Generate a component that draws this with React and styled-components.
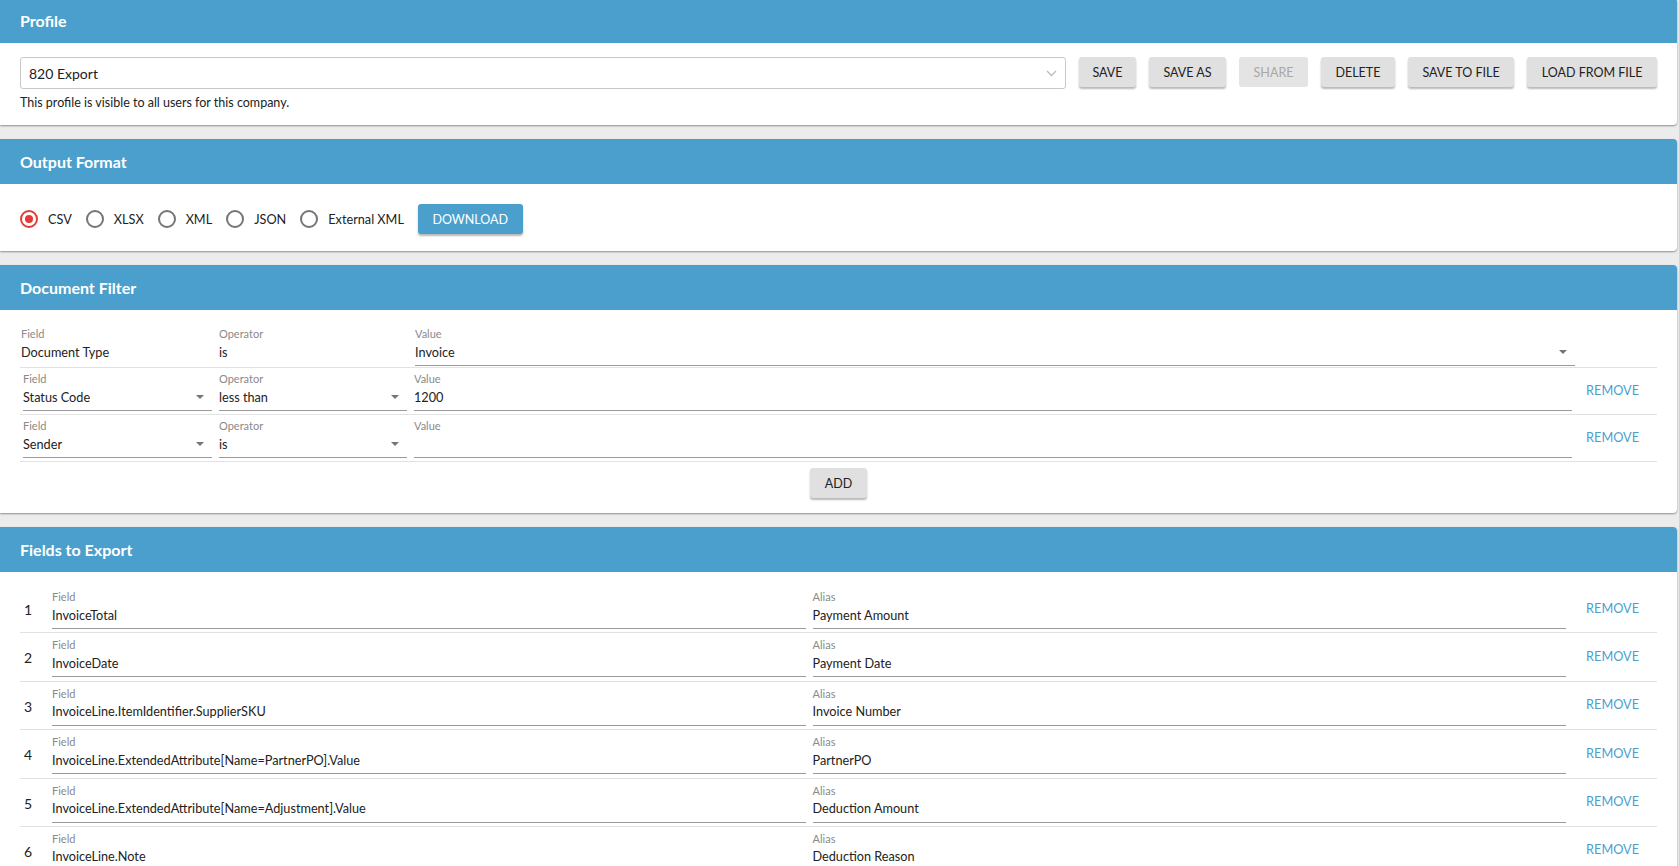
import React from 'react'
import styled, { createGlobalStyle } from 'styled-components'

const GlobalStyle = createGlobalStyle`
  body {
    margin: 0;
    background: #ececec;
    font-family: Lato, "Open Sans", sans-serif;
    color: #222;
  }
`

const Page = styled.div`
  display: flex;
  flex-direction: column;
  gap: 14px;
  margin-top: -2px;
  padding: 0 2px 20px 0;
`

const Card = styled.section`
  background: #fff;
  border-radius: 0 4px 4px 0;
  box-shadow: 0 1px 2px rgba(0, 0, 0, 0.4);
  overflow: hidden;
`

const CardHeader = styled.div`
  height: 45px;
  background: #4b9fcc;
  color: #fff;
  font-weight: 700;
  font-size: 16px;
  display: flex;
  align-items: center;
  padding: 0 20px;
`

const CardBody = styled.div`
  padding: ${(p) => p.$pad || '14px 20px'};
`

/* profile */
const ProfileRow = styled.div`
  display: flex;
  align-items: flex-start;
  gap: 13px;
`

const SelectBox = styled.div`
  flex: 1;
  height: 32px;
  box-sizing: border-box;
  border: 1px solid #c8c8c8;
  border-radius: 3px;
  padding: 0 8px 0 8px;
  display: flex;
  align-items: center;
  justify-content: space-between;
  font-size: 14px;
`

const Button = styled.button`
  height: 30px;
  padding: 0 ${(p) => p.$px || 14.5}px;
  border: none;
  border-radius: 3px;
  font-family: Lato, "Open Sans", sans-serif;
  font-size: 12.5px;
  text-transform: uppercase;
  white-space: nowrap;
  cursor: pointer;
  background: ${(p) => (p.$primary ? '#4b9fcc' : p.disabled ? '#e4e4e4' : '#e0e0e0')};
  color: ${(p) => (p.$primary ? '#fff' : p.disabled ? '#a8a8a8' : '#222')};
  box-shadow: ${(p) => (p.disabled ? 'none' : '0 2px 2px rgba(0,0,0,0.28)')};
`

const Helper = styled.div`
  margin-top: 6px;
  font-size: 12.5px;
  line-height: 16px;
`

/* output format */
const RadioGroup = styled.div`
  display: flex;
  align-items: center;
  gap: 14px;
`

const RadioOption = styled.label`
  display: flex;
  align-items: center;
  gap: 10px;
  font-size: 12.7px;
`

const RadioCircle = styled.span`
  width: 18px;
  height: 18px;
  box-sizing: border-box;
  border-radius: 50%;
  border: 2px solid ${(p) => (p.$on ? '#e53935' : '#757575')};
  display: flex;
  align-items: center;
  justify-content: center;
  &::after {
    content: '';
    width: 8px;
    height: 8px;
    border-radius: 50%;
    background: ${(p) => (p.$on ? '#e53935' : 'transparent')};
  }
`

/* rows */
const Row = styled.div`
  display: flex;
  align-items: stretch;
  padding: ${(p) => p.$pad || '4px 0 3px 3px'};
  border-bottom: 1px solid #e2e2e2;
`

const Cell = styled.div`
  display: flex;
  flex-direction: column;
  width: ${(p) => (p.$w ? p.$w + 'px' : 'auto')};
  flex: ${(p) => (p.$w ? 'none' : '1')};
  margin-right: ${(p) => (p.$gap === undefined ? 7 : p.$gap)}px;
  min-width: 0;
`

const Label = styled.div`
  font-size: 11px;
  line-height: 14px;
  color: #8a8a8a;
`

const Input = styled.div`
  height: 25px;
  box-sizing: border-box;
  display: flex;
  align-items: center;
  justify-content: space-between;
  font-size: 12.7px;
  white-space: nowrap;
  border-bottom: 1px solid ${(p) => (p.$plain ? 'transparent' : '#9a9a9a')};
  padding: 0 8px 3px 0;
`

const Num = styled.div`
  width: 25px;
  margin-right: 7px;
  padding-left: 4px;
  box-sizing: border-box;
  display: flex;
  align-items: center;
  font-size: 14px;
`

const RemoveCell = styled.div`
  width: ${(p) => p.$w}px;
  display: flex;
  align-items: center;
  justify-content: flex-end;
  padding-right: 18px;
  padding-bottom: 4px;
  box-sizing: border-box;
`

const RemoveLink = styled.span`
  font-size: 12.7px;
  color: #4a9fd0;
  cursor: pointer;
`

const AddWrap = styled.div`
  display: flex;
  justify-content: center;
  margin-top: 6px;
`

const Arrow = () => (
  <svg width="8" height="4" viewBox="0 0 8 4">
    <path d="M0 0 L8 0 L4 4z" fill="#757575" />
  </svg>
)

const Chevron = () => (
  <svg width="11" height="7" viewBox="0 0 11 7">
    <polyline points="1,1 5.5,5.5 10,1" fill="none" stroke="#bdbdbd" strokeWidth="1.4" />
  </svg>
)

const formats = ['CSV', 'XLSX', 'XML', 'JSON', 'External XML']

const filters = [
  { field: 'Status Code', op: 'less than', value: '1200' },
  { field: 'Sender', op: 'is', value: '' },
]

const exportsList = [
  ['InvoiceTotal', 'Payment Amount'],
  ['InvoiceDate', 'Payment Date'],
  ['InvoiceLine.ItemIdentifier.SupplierSKU', 'Invoice Number'],
  ['InvoiceLine.ExtendedAttribute[Name=PartnerPO].Value', 'PartnerPO'],
  ['InvoiceLine.ExtendedAttribute[Name=Adjustment].Value', 'Deduction Amount'],
  ['InvoiceLine.Note', 'Deduction Reason'],
]

export default function App() {
  return (
    <>
      <GlobalStyle />
      <Page>
        <Card>
          <CardHeader>Profile</CardHeader>
          <CardBody $pad="14px 20px 14px 20px">
            <ProfileRow>
              <SelectBox>
                <span>820 Export</span>
                <Chevron />
              </SelectBox>
              <Button $px={13.5}>Save</Button>
              <Button>Save as</Button>
              <Button disabled>Share</Button>
              <Button>Delete</Button>
              <Button>Save to file</Button>
              <Button>Load from file</Button>
            </ProfileRow>
            <Helper>This profile is visible to all users for this company.</Helper>
          </CardBody>
        </Card>

        <Card>
          <CardHeader>Output Format</CardHeader>
          <CardBody $pad="20px 20px 17px 20px">
            <RadioGroup>
              {formats.map((f, i) => (
                <RadioOption key={f}>
                  <RadioCircle $on={i === 0} />
                  {f}
                </RadioOption>
              ))}
              <Button $primary>Download</Button>
            </RadioGroup>
          </CardBody>
        </Card>

        <Card>
          <CardHeader>Document Filter</CardHeader>
          <CardBody $pad="13px 20px 15px 20px">
            <Row $pad="4px 0 1px 1px">
              <Cell $w={191}>
                <Label>Field</Label>
                <Input $plain>Document Type</Input>
              </Cell>
              <Cell $w={189}>
                <Label>Operator</Label>
                <Input $plain>is</Input>
              </Cell>
              <Cell $gap={0}>
                <Label>Value</Label>
                <Input>
                  <span>Invoice</span>
                  <Arrow />
                </Input>
              </Cell>
              <RemoveCell $w={82} />
            </Row>
            {filters.map((f) => (
              <Row key={f.field}>
                <Cell $w={189}>
                  <Label>Field</Label>
                  <Input>
                    <span>{f.field}</span>
                    <Arrow />
                  </Input>
                </Cell>
                <Cell $w={188}>
                  <Label>Operator</Label>
                  <Input>
                    <span>{f.op}</span>
                    <Arrow />
                  </Input>
                </Cell>
                <Cell $gap={0}>
                  <Label>Value</Label>
                  <Input>{f.value}</Input>
                </Cell>
                <RemoveCell $w={85}>
                  <RemoveLink>REMOVE</RemoveLink>
                </RemoveCell>
              </Row>
            ))}
            <AddWrap>
              <Button>Add</Button>
            </AddWrap>
          </CardBody>
        </Card>

        <Card>
          <CardHeader>Fields to Export</CardHeader>
          <CardBody $pad="13px 20px 14px 20px">
            {exportsList.map(([field, alias], i) => (
              <Row key={field} $pad="5px 0 3.4px 0">
                <Num>{i + 1}</Num>
                <Cell>
                  <Label>Field</Label>
                  <Input>{field}</Input>
                </Cell>
                <Cell $gap={0}>
                  <Label>Alias</Label>
                  <Input>{alias}</Input>
                </Cell>
                <RemoveCell $w={91}>
                  <RemoveLink>REMOVE</RemoveLink>
                </RemoveCell>
              </Row>
            ))}
          </CardBody>
        </Card>
      </Page>
    </>
  )
}
